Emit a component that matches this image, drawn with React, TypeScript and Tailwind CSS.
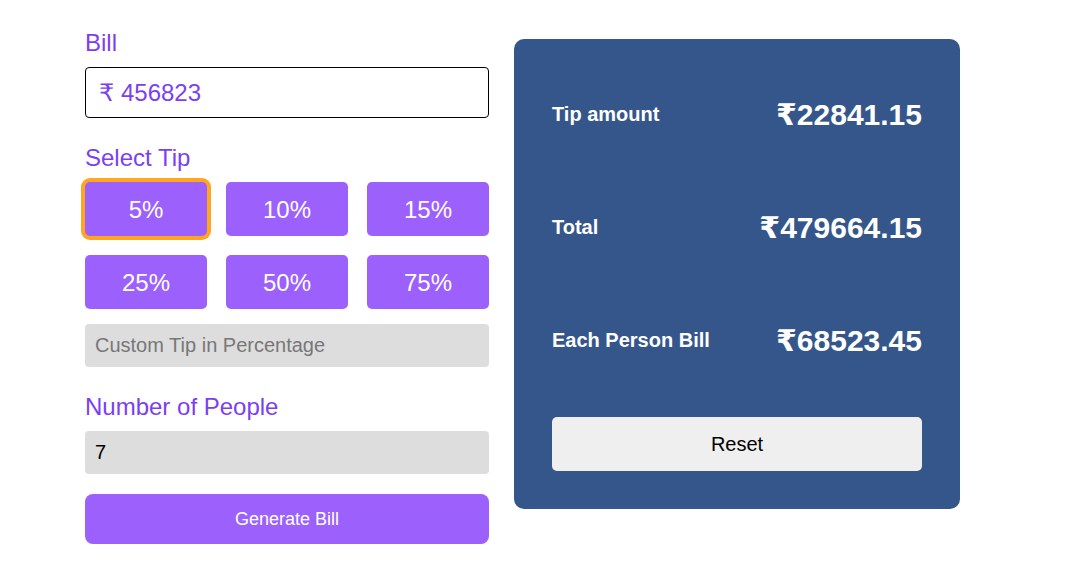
import { useState } from "react";

const TIPS = [5, 10, 15, 25, 50, 75];

const ROWS = [
  { label: "Tip amount", value: "₹22841.15" },
  { label: "Total", value: "₹479664.15" },
  { label: "Each Person Bill", value: "₹68523.45" },
];

export default function App() {
  const [tip, setTip] = useState(5);

  return (
    <div className="flex min-h-[588px] items-start gap-[25px] bg-white pl-[85px] pt-[29px] font-['Liberation_Sans','DejaVu_Sans',sans-serif]">
      <div className="flex w-[404px] flex-col">
        <label className="text-[24px] leading-[28px] text-[#7a3ff4]">Bill</label>
        <div className="mt-[10px] flex h-[51px] items-center rounded-[4px] border border-black px-[13px] text-[24px] text-[#7a3ff4]">
          ₹ 456823
        </div>

        <label className="mt-[26px] text-[24px] leading-[28px] text-[#7a3ff4]">Select Tip</label>
        <div className="mt-[10px] grid grid-cols-3 gap-x-[19px] gap-y-[19px]">
          {TIPS.map((t) => (
            <button
              key={t}
              onClick={() => setTip(t)}
              className={
                tip === t
                  ? "h-[54px] rounded-[5px] bg-[#9c60fd] pt-[2px] text-[24px] text-white ring-4 ring-[#ffa51f]"
                  : "h-[54px] rounded-[5px] bg-[#9c60fd] pt-[2px] text-[24px] text-white"
              }
            >
              {t}%
            </button>
          ))}
        </div>
        <input
          placeholder="Custom Tip in Percentage"
          className="mt-[15px] h-[43px] rounded-[4px] bg-[#dddddd] px-[10px] text-[20px] text-black outline-none placeholder:text-[#777777]"
        />

        <label className="mt-[26px] text-[24px] leading-[28px] text-[#7a3ff4]">Number of People</label>
        <input
          defaultValue="7"
          className="mt-[10px] h-[43px] rounded-[4px] bg-[#dddddd] px-[10px] text-[20px] text-black outline-none"
        />

        <button className="mt-[20px] h-[50px] rounded-[8px] bg-[#9c60fd] text-[18px] text-white">
          Generate Bill
        </button>
      </div>

      <div className="mt-[10px] flex w-[446px] flex-col rounded-[10px] bg-[#35568a] px-[38px] pb-[38px] pt-[39px] text-white">
        <div className="flex flex-col gap-[41px]">
          {ROWS.map((r) => (
            <div key={r.label} className="flex h-[72px] items-center justify-between">
              <span className="text-[20px] font-bold">{r.label}</span>
              <span className="text-[30px] font-bold">{r.value}</span>
            </div>
          ))}
        </div>
        <button className="mt-[41px] h-[54px] rounded-[5px] bg-[#efefef] text-[20px] text-black">Reset</button>
      </div>
    </div>
  );
}
